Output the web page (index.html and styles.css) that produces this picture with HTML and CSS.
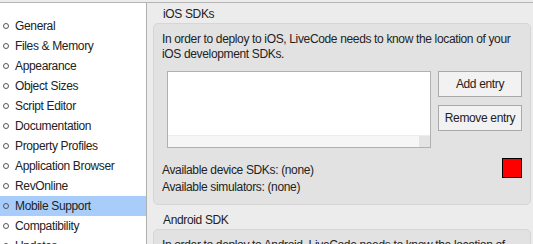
FILE: index.html
```html
<!DOCTYPE html>
<html lang="en">
  <head>
    <meta charset="UTF-8" />
    <title>Preferences</title>
    <link rel="stylesheet" href="styles.css">
  </head>
  <body>
    <div class="window">
      <!-- Category list -->
      <ul class="sidebar">
        <li>General</li>
        <li>Files &amp; Memory</li>
        <li>Appearance</li>
        <li>Object Sizes</li>
        <li>Script Editor</li>
        <li>Documentation</li>
        <li>Property Profiles</li>
        <li>Application Browser</li>
        <li>RevOnline</li>
        <li class="selected">Mobile Support</li>
        <li>Compatibility</li>
        <li>Updates</li>
      </ul>

      <div class="main">
        <div class="group-title">iOS SDKs</div>
        <div class="group">
          <p class="desc">
            In order to deploy to iOS, LiveCode needs to know the location of your
            iOS development SDKs.
          </p>
          <div class="sdk-row">
            <div class="sdk-list">
              <div class="hscroll"><div class="corner"></div></div>
            </div>
            <div class="buttons">
              <button>Add entry</button>
              <button>Remove entry</button>
            </div>
          </div>
          <div class="status">
            <div class="status-lines">
              <div>Available device SDKs: (none)</div>
              <div>Available simulators: (none)</div>
            </div>
            <div class="indicator"></div>
          </div>
        </div>

        <div class="group-title">Android SDK</div>
        <div class="group">
          <p class="desc">
            In order to deploy to Android, LiveCode needs to know the location of
            the Android SDK.
          </p>
        </div>
      </div>
    </div>
  </body>
</html>
```

FILE: styles.css
```css
/* General Styles */
body {
  margin: 0;
  background: #ececec;
  font-family: "Liberation Sans", Arial, sans-serif;
  font-size: 12px;
  letter-spacing: -0.35px;
  color: #222;
  overflow: hidden;
}

.window {
  display: grid;
  grid-template-columns: 147px 1fr;
  margin-top: 2px;
  border-top: 1px solid #b5b5b5;
  height: 241px;
  overflow: hidden;
}

/* Sidebar */
.sidebar {
  list-style: none;
  margin: 0;
  padding: 13px 0 0;
  background: #fff;
  border-right: 1px solid #b0b0b0;
}

.sidebar li {
  display: flex;
  align-items: center;
  height: 20px;
  padding-left: 3px;
  white-space: nowrap;
}

.sidebar li::before {
  content: "";
  width: 4px;
  height: 4px;
  border: 1px solid #555;
  border-radius: 50%;
  margin-right: 6px;
}

.sidebar li.selected {
  background: #a8cdfb;
}

/* Main panel */
.main {
  padding: 0 4px 0 6px;
}

.group-title {
  height: 20px;
  line-height: 22px;
  padding-left: 10px;
}

.group {
  background: #e2e2e2;
  border: 1px solid #d6d6d6;
  border-radius: 5px;
  padding: 8px 8px 8px 8px;
  margin-bottom: 4px;
}

.desc {
  margin: 0;
  line-height: 15px;
}

.sdk-row {
  display: flex;
  gap: 7px;
  margin: 9px 0 0 5px;
}

.sdk-list {
  width: 262px;
  height: 75px;
  background: #fff;
  border: 1px solid #b0b0b0;
  display: flex;
  align-items: flex-end;
}

.hscroll {
  flex: 1;
  height: 11px;
  background: #f6f6f6;
  border-top: 1px solid #ececec;
  display: flex;
  justify-content: flex-end;
}

.corner {
  width: 11px;
  background: #e4e4e4;
}

.buttons {
  display: flex;
  flex-direction: column;
  gap: 8px;
}

button {
  width: 84px;
  height: 26px;
  background: #f2f2f2;
  border: 1px solid #a9a9a9;
  font-family: inherit;
  font-size: 12px;
  letter-spacing: inherit;
  color: #222;
  padding: 0;
}

.status {
  display: flex;
  justify-content: space-between;
  align-items: flex-start;
  margin-top: 14px;
}

.status-lines {
  line-height: 17px;
}

.indicator {
  width: 18px;
  height: 18px;
  margin-top: -4px;
  background: #ff0000;
  border: 1px solid #000;
}
```
